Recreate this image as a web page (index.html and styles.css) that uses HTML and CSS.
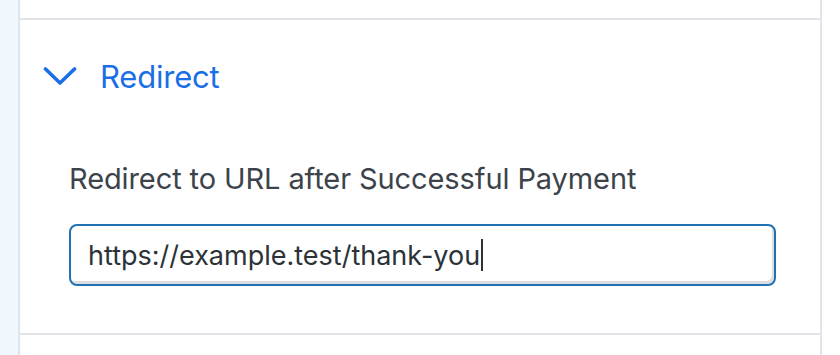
FILE: index.html
```html
<!DOCTYPE html>
<html lang="en">
<head>
    <meta charset="UTF-8">
    <title>Redirect</title>
    <link rel="stylesheet" href="styles.css">
</head>
<body>
    <div class="layout">
        <div class="rail"></div>
        <div class="panel">
            <div class="section section-prev"></div>
            <div class="section">
                <div class="section-head">
                    <svg class="chevron" width="34" height="20" viewBox="0 0 34 20">
                        <path d="M2.5 3 L17 17 L31.5 3" fill="none" stroke="#1b6fe6" stroke-width="3.6" stroke-linecap="round" stroke-linejoin="round"/>
                    </svg>
                    <span class="section-title">Redirect</span>
                </div>
                <div class="section-body">
                    <label class="field-label" for="redirect-url">Redirect to URL after Successful Payment</label>
                    <div class="field-input">
                        <span class="value">https://example.test/thank-you</span><span class="caret"></span>
                    </div>
                </div>
            </div>
            <div class="section section-next"></div>
        </div>
        <div class="gutter"></div>
    </div>
</body>
</html>
```

FILE: styles.css
```css
body {
    margin: 0;
    background: #fff;
    font-family: Inter, "Noto Sans", sans-serif;
}
.layout {
    display: flex;
    height: 355px;
}
.rail {
    width: 18px;
    background: #f0f7fd;
    border-right: 2px solid #dfe5ee;
}
.panel {
    width: 800px;
    border-right: 2px solid #e1e4ea;
    display: flex;
    flex-direction: column;
}
.gutter {
    flex: 1;
    background: #fff;
}
.section-prev {
    height: 18px;
    border-bottom: 2px solid #e1e5ea;
}
.section {
    border-bottom: 2px solid #e1e5ea;
}
.section-next {
    flex: 1;
    border-bottom: none;
}
.section-head {
    display: flex;
    align-items: center;
    padding: 39px 0 0 23px;
    height: 34px;
}
.chevron {
    margin-right: 23px;
}
.section-title {
    color: #1b6fe6;
    font-size: 31px;
    letter-spacing: -0.2px;
}
.section-body {
    padding: 68px 44px 47px 49px;
}
.field-label {
    display: block;
    color: #3c434a;
    font-size: 29px;
    line-height: 36px;
    letter-spacing: -0.1px;
    margin-bottom: 27px;
}
.field-input {
    display: flex;
    align-items: center;
    height: 62px;
    box-sizing: border-box;
    border: 2px solid #2271b1;
    border-radius: 8px;
    box-shadow: inset -2px -3px 0 #dcdee2;
    padding: 0 17px;
}
.value {
    color: #2c3338;
    font-size: 27px;
    letter-spacing: 0;
}
.caret {
    width: 2px;
    height: 32px;
    background: #2c3338;
    margin-left: 1px;
}
```
